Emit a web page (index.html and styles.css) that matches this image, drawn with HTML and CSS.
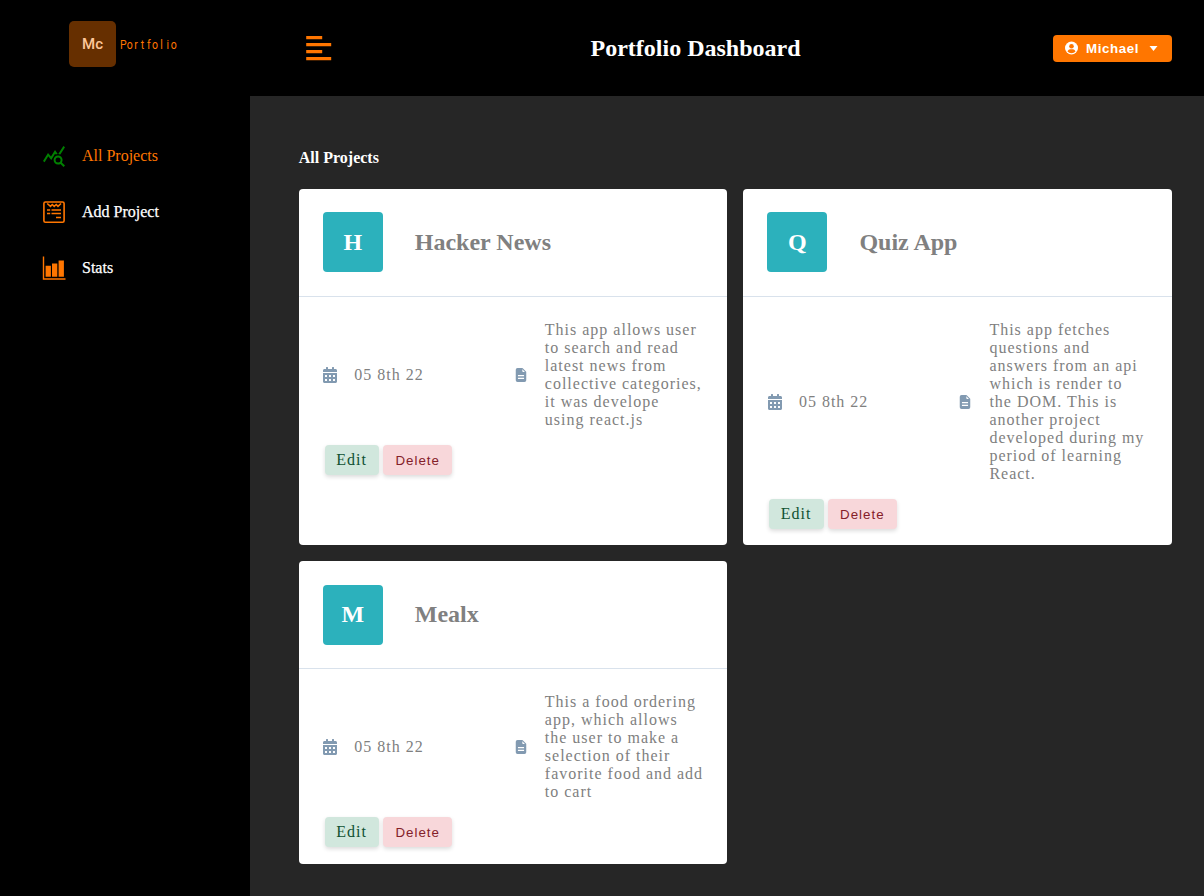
FILE: index.html
```html
<!DOCTYPE html>
<html lang="en">
<head>
<meta charset="utf-8">
<title>Portfolio Dashboard</title>
<link rel="stylesheet" href="styles.css">
</head>
<body>
<svg class="defs" width="0" height="0">
  <symbol id="calendar" viewBox="0 0 448 512"><path d="M0 464c0 26.500 21.500 48 48 48h352c26.500 0 48-21.500 48-48V192H0v272zm320-196c0-6.600 5.400-12 12-12h40c6.600 0 12 5.400 12 12v40c0 6.600-5.400 12-12 12h-40c-6.600 0-12-5.400-12-12v-40zm0 128c0-6.600 5.400-12 12-12h40c6.600 0 12 5.400 12 12v40c0 6.600-5.400 12-12 12h-40c-6.600 0-12-5.400-12-12v-40zM192 268c0-6.600 5.400-12 12-12h40c6.600 0 12 5.400 12 12v40c0 6.600-5.400 12-12 12h-40c-6.600 0-12-5.400-12-12v-40zm0 128c0-6.600 5.400-12 12-12h40c6.600 0 12 5.400 12 12v40c0 6.600-5.400 12-12 12h-40c-6.600 0-12-5.400-12-12v-40zM64 268c0-6.600 5.400-12 12-12h40c6.600 0 12 5.400 12 12v40c0 6.600-5.400 12-12 12H76c-6.600 0-12-5.400-12-12v-40zm0 128c0-6.600 5.400-12 12-12h40c6.600 0 12 5.400 12 12v40c0 6.600-5.400 12-12 12H76c-6.600 0-12-5.400-12-12v-40zM400 64h-48V16c0-8.800-7.200-16-16-16h-32c-8.800 0-16 7.200-16 16v48H160V16c0-8.800-7.200-16-16-16h-32c-8.800 0-16 7.200-16 16v48H48C21.500 64 0 85.500 0 112v48h448v-48c0-26.500-21.500-48-48-48z"/></symbol>
  <symbol id="doc" viewBox="0 0 16 16"><path d="M9.293 0H4a2 2 0 0 0-2 2v12a2 2 0 0 0 2 2h8a2 2 0 0 0 2-2V4.707A1 1 0 0 0 13.707 4L10 .293A1 1 0 0 0 9.293 0zM9.500 3.500v-2l3 3h-2a1 1 0 0 1-1-1zM4.500 9.300v-1.300h7v1.300zM4.500 12.500v-1.300h7v1.300z"/></symbol>
</svg>
<div class="layout">
  <aside class="sidebar">
    <div class="logo">
      <span class="logo-mark">Mc</span>
      <svg width="66" height="20"><text class="logo-text" transform="scale(.78 1)" x="4.400 12.500 20.600 28.800 37 45 53.100 61.300 69" y="15">Portfolio</text></svg>
    </div>
    <nav class="nav">
      <a class="nav-link active">
        <svg width="24" height="24" viewBox="0 0 24 24" fill="#008000"><path d="M19.880 18.470c.44-.7.7-1.510.7-2.390 0-2.490-2.010-4.500-4.500-4.500s-4.500 2.010-4.500 4.500 2.010 4.500 4.490 4.500c.88 0 1.700-.26 2.390-.7L21.580 23 23 21.580l-3.120-3.110zm-3.800.11a2.500 2.500 0 0 1 0-5 2.500 2.500 0 0 1 0 5zm-.36-8.500c-.74.02-1.450.18-2.100.45l-.55-.83-3.800 6.180-3.010-3.520-3.630 5.810L1 17l5-8 3 3.500L13 6l2.720 4.080zm2.590.5c-.64-.28-1.330-.45-2.050-.49L21.380 2 23 3.180l-4.690 7.400z"/></svg>
        <span>All Projects</span>
      </a>
      <a class="nav-link">
        <svg width="24" height="24" viewBox="0 0 24 24" fill="none" stroke="#ff7600" stroke-width="1.600"><rect x="1.900" y="2" width="20.200" height="20.300" rx="1.500"/><path d="M5.200 3.500 8.500 6.300 10.300 4.500 12.200 6.300 14.200 4.500 16 6.300 19 3.500M5 10h3.200M9.500 10H19M5 13.500h3.200M9.500 13.500H19M14 17.500h5"/></svg>
        <span>Add Project</span>
      </a>
      <a class="nav-link">
        <svg width="24" height="24" viewBox="0 0 24 24" fill="#ff7600"><path d="M.8.500h1.400v21.800H23.500v1.500H.8zM3.600 9.800h5.300v11H3.600zM10 7.600h5.300v13.200H10zM16.600 4.600h5.300v16.200h-5.300z"/></svg>
        <span>Stats</span>
      </a>
    </nav>
  </aside>
  <div class="page">
    <header class="topbar">
      <svg class="menu" width="26" height="26" viewBox="0 0 26 26" fill="#ff7600"><path d="M.2 1h16v3.200h-16zM.2 8h25v3.200h-25zM.2 15h16v3.200h-16zM.2 22h25v3.200h-25z"/></svg>
      <h1 class="title">Portfolio Dashboard</h1>
      <button class="user">
        <svg width="13" height="14" viewBox="0 0 13 14"><circle cx="6.500" cy="7" r="6.500" fill="#fff"/><circle cx="6.500" cy="5.300" r="2.300" fill="#ff7600"/><path d="M2.500 10.500a4 3.200 0 0 1 2.400-2.200h3.200a4 3.200 0 0 1 2.400 2.200 5.300 5.300 0 0 1-8 0z" fill="#ff7600"/></svg>
        <span>Michael</span>
        <svg class="caret" width="9" height="5" viewBox="0 0 8 5"><path d="M0 0h8L4 5z" fill="#fff"/></svg>
      </button>
    </header>
    <main class="content">
      <h2 class="section-title">All Projects</h2>
      <div class="cards">
        <article class="card">
          <div class="card-head"><div class="badge">H</div><h3 class="card-title">Hacker News</h3></div>
          <div class="info">
            <div class="date"><svg width="14" height="16"><use href="#calendar"/></svg><span>05 8th 22</span></div>
            <div class="desc"><svg width="14" height="14"><use href="#doc"/></svg><p>This app allows user<br>to search and read<br>latest news from<br>collective categories,<br>it was develope<br>using react.js</p></div>
          </div>
          <div class="actions"><a class="btn edit">Edit</a><button class="btn delete">Delete</button></div>
        </article>
        <article class="card">
          <div class="card-head"><div class="badge">Q</div><h3 class="card-title">Quiz App</h3></div>
          <div class="info">
            <div class="date"><svg width="14" height="16"><use href="#calendar"/></svg><span>05 8th 22</span></div>
            <div class="desc"><svg width="14" height="14"><use href="#doc"/></svg><p>This app fetches<br>questions and<br>answers from an api<br>which is render to<br>the DOM. This is<br>another project<br>developed during my<br>period of learning<br>React.</p></div>
          </div>
          <div class="actions"><a class="btn edit">Edit</a><button class="btn delete">Delete</button></div>
        </article>
        <article class="card lower">
          <div class="card-head"><div class="badge">M</div><h3 class="card-title">Mealx</h3></div>
          <div class="info">
            <div class="date"><svg width="14" height="16"><use href="#calendar"/></svg><span>05 8th 22</span></div>
            <div class="desc"><svg width="14" height="14"><use href="#doc"/></svg><p>This a food ordering<br>app, which allows<br>the user to make a<br>selection of their<br>favorite food and add<br>to cart</p></div>
          </div>
          <div class="actions"><a class="btn edit">Edit</a><button class="btn delete">Delete</button></div>
        </article>
      </div>
    </main>
  </div>
</div>
</body>
</html>
```
FILE: styles.css
```css
* { box-sizing: border-box; margin: 0; }
body { background: #262626; font-family: "Liberation Serif", "Times New Roman", serif; font-size: 16px; line-height: 18px; }
svg { display: block; flex: none; }
.defs { position: absolute; }
.layout { display: grid; grid-template-columns: 250px 1fr; height: 896px; overflow: hidden; }
.sidebar { background: #000; }
.logo { display: flex; align-items: center; gap: 4px; height: 96px; padding: 0 0 8px 69px; }
.logo-mark { display: grid; place-items: center; width: 47px; height: 46px; border-radius: 5px; background: #662f00; color: #ffc799; font: 500 15px Roboto, sans-serif; }
.logo-text { font: 400 13.5px Roboto, sans-serif; fill: #ff7600; text-anchor: middle; }
.nav { padding-top: 32px; }
.nav-link { display: flex; align-items: center; gap: 16px; height: 56px; padding-left: 42px; color: #fff; -webkit-text-stroke: 0.25px; }
.nav-link.active { color: #ff7600; -webkit-text-stroke: 0; }
.topbar { display: flex; align-items: center; justify-content: space-between; height: 96px; padding: 0 32px 0 56px; background: #000; }
.title { padding-left: 6px; color: #fff; font-size: 24px; line-height: 28px; }
.user { display: flex; align-items: center; width: 119px; height: 27px; padding: 0 12px; border: 0; border-radius: 4px; background: #ff7600; color: #fff; font: bold 13.333px "Liberation Sans", Arial, sans-serif; letter-spacing: .6px; }
.user span { margin-left: 8px; }
.user .caret { margin-left: auto; margin-right: 2px; }
.content { padding: 53px 32px 0 48.8px; }
.section-title { font-size: 16px; line-height: 18px; color: #fff; margin-bottom: 22px; }
.cards { display: grid; grid-template-columns: 1fr 1fr; gap: 16px; }
.card { background: #fff; border-radius: 4px; color: #808080; letter-spacing: 1px; }
.card-head { display: flex; align-items: center; gap: 32px; height: 108px; padding: 0 24px 1px; border-bottom: 1px solid #d9e2ec; }
.lower { padding-bottom: 1px; }
.lower .card-head { padding-bottom: 0; }
.badge { display: grid; place-items: center; width: 60px; height: 60px; border-radius: 4px; background: #2cb1bc; color: #fff; font-size: 24px; font-weight: bold; letter-spacing: 0; }
.card-title { font-size: 24px; line-height: 28px; letter-spacing: 0; }
.lower .badge { padding-bottom: 2px; }
.lower .card-title { padding-bottom: 1px; }
.info { display: grid; grid-template-columns: 190.5px 1fr; align-items: center; padding: 24px 20px 0 24.5px; }
.date, .desc { display: flex; align-items: center; gap: 17px; }
.desc p { white-space: nowrap; }
.info svg { fill: #829ab1; }
.actions { display: flex; gap: 4px; padding: 16px 26px; }
.btn { display: grid; place-items: center; height: 30px; padding: 0; border: 0; border-radius: 4px; box-shadow: 0 2px 4px rgba(0, 0, 0, .14); letter-spacing: 1px; }
.edit { width: 54.4px; padding-right: 1px; background: #d1e7dd; color: #0f5132; }
.delete { width: 69px; background: #f8d7da; color: #842029; font: 13.333px "Liberation Sans", Arial, sans-serif; }
```
